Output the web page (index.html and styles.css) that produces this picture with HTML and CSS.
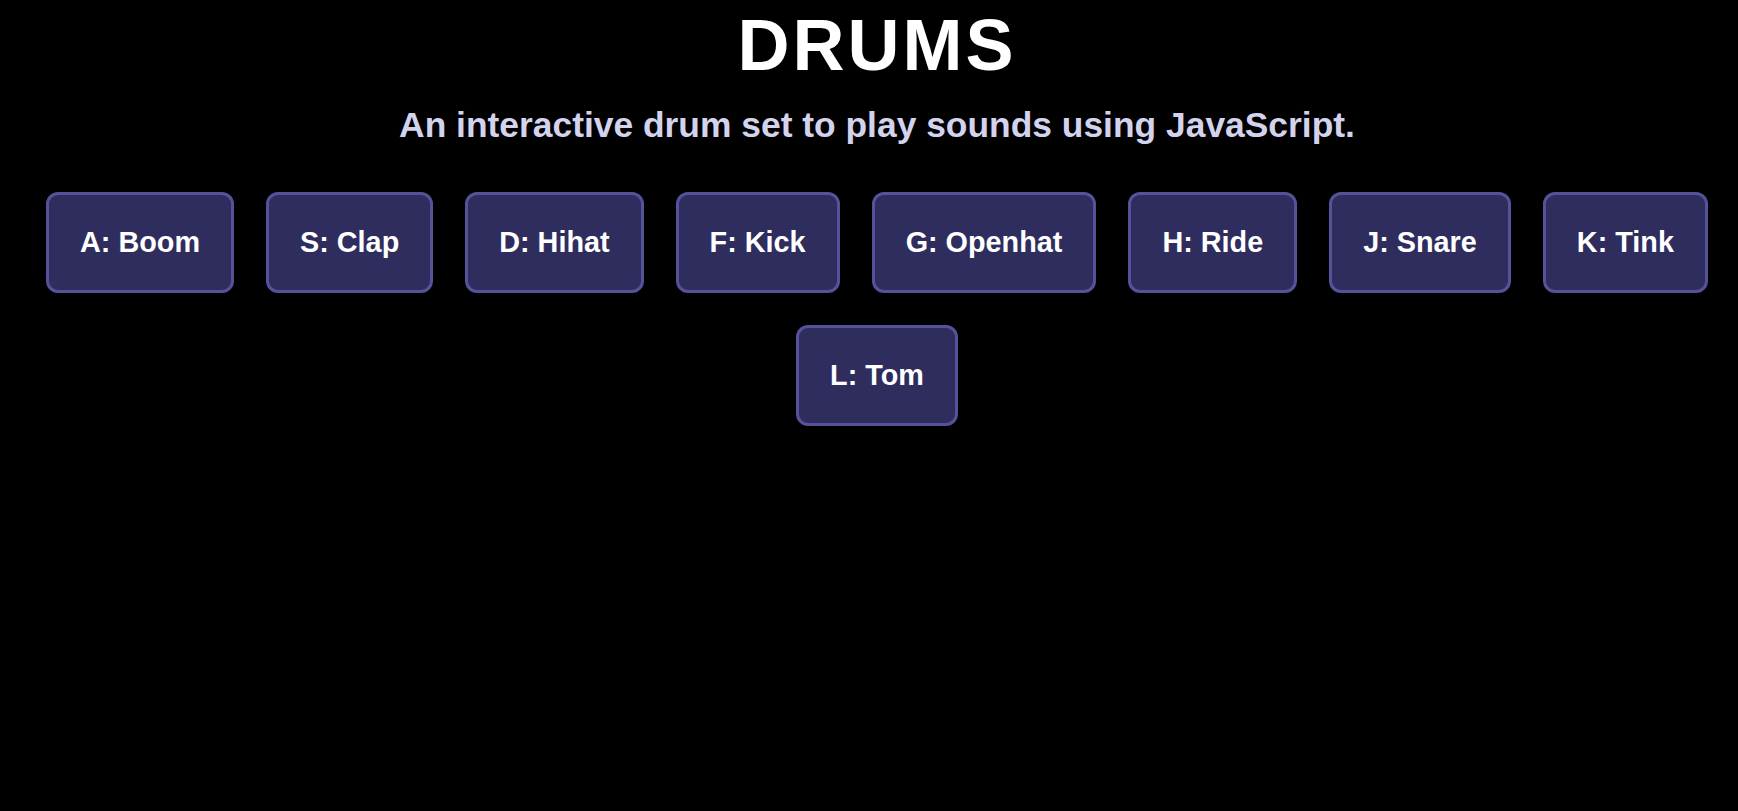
FILE: index.html
```html
<!DOCTYPE html>
<html lang="en">
<head>
<meta charset="utf-8">
<title>Drums</title>
<link rel="stylesheet" href="styles.css">
</head>
<body>
<main class="page">
  <h1 class="title">DRUMS</h1>
  <p class="subtitle">An interactive drum set to play sounds using JavaScript.</p>
  <div class="pads">
    <button class="pad">A: Boom</button>
    <button class="pad">S: Clap</button>
    <button class="pad">D: Hihat</button>
    <button class="pad">F: Kick</button>
    <button class="pad">G: Openhat</button>
    <button class="pad">H: Ride</button>
    <button class="pad">J: Snare</button>
    <button class="pad">K: Tink</button>
    <button class="pad">L: Tom</button>
  </div>
</main>
</body>
</html>
```
FILE: styles.css
```css
html, body {
  margin: 0;
  padding: 0;
  background: #000;
  height: 100%;
}
body {
  font-family: "Liberation Sans", Arial, sans-serif;
  color: #fff;
}
.page {
  box-sizing: border-box;
  width: 100%;
  padding-left: 16px;
  padding-top: 4px;
  text-align: center;
}
.title {
  margin: 0;
  font-size: 72px;
  font-weight: 700;
  letter-spacing: 3px;
  line-height: normal;
  color: #fff;
}
.subtitle {
  margin: 19px 0 30px;
  font-size: 35.4px;
  font-weight: 700;
  color: #d3d3ee;
  line-height: normal;
}
.pads {
  display: flex;
  flex-wrap: wrap;
  justify-content: center;
}
.pad {
  margin: 16px;
  padding: 31px;
  font-family: "Liberation Sans", Arial, sans-serif;
  font-size: 28.8px;
  font-weight: 700;
  line-height: normal;
  color: #fff;
  background: #2e2d5e;
  border: 3px solid #56529a;
  border-radius: 12px;
  cursor: pointer;
}
```
